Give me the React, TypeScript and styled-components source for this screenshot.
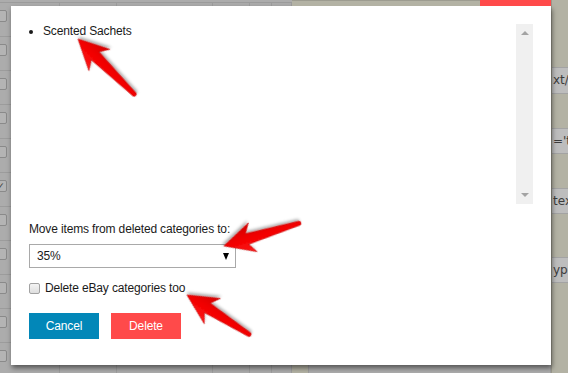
import React from "react";
import styled, { createGlobalStyle } from "styled-components";

const GlobalStyle = createGlobalStyle`
  html, body {
    margin: 0;
    padding: 0;
    background: #acacac;
  }
`;

const Page = styled.div`
  position: relative;
  width: 568px;
  height: 373px;
  overflow: hidden;
  display: flex;
  background: #acacac;
  font-family: "Liberation Sans", Arial, sans-serif;
`;

/* ---------- dimmed page behind the dialog ---------- */

const TablePane = styled.div`
  flex: 0 0 551px;
  display: flex;
  flex-direction: column;
`;

const HeaderBar = styled.div`
  height: 3px;
  display: flex;
  border-bottom: 1px solid #9c9c9c;
  box-sizing: border-box;
`;

const HeaderSpacer = styled.div`
  flex: 0 0 292px;
`;

const HeaderOlive = styled.div`
  position: relative;
  z-index: 1;
  flex: 1;
  height: 6px;
  background: #b3b2a4;
  border-top: 1px solid #9d9c90;
  box-sizing: border-box;
`;

const RedTab = styled.div`
  position: relative;
  z-index: 1;
  flex: 0 0 71px;
  height: 6px;
  background: #ff4a4a;
`;

const TableRow = styled.div`
  height: 34px;
  flex: none;
  display: grid;
  grid-template-columns: 60px 57px 96px 37px 22px 20px 17px 1fr;
  border-bottom: 1px solid #9c9c9c;
  box-sizing: border-box;
`;

const Cell = styled.div<{ $olive?: boolean }>`
  border-right: 1px solid #9e9e9e;
  background: ${(p) => (p.$olive ? "#b3b2a4" : "transparent")};
  padding-top: 7px;
`;

const RowCheck = styled.span<{ $checked?: boolean }>`
  display: block;
  width: 10px;
  height: 10px;
  margin-left: -5px;
  border: 1px solid #8a8a8a;
  border-radius: 2px;
  background: #b4b4b4;
  color: #333;
  font-size: 9px;
  line-height: 10px;
  text-align: center;
`;

const SidePane = styled.div`
  flex: 1;
  display: flex;
  flex-direction: column;
  background: #b3b2a4;
  border-left: 1px solid #9a998c;
`;

const SideBand = styled.div<{ $h: number; $grey?: boolean }>`
  height: ${(p) => p.$h}px;
  flex: none;
  box-sizing: border-box;
  background: ${(p) => (p.$grey ? "#bdbdbd" : "#b3b2a4")};
  border-top: ${(p) => (p.$grey ? "1px solid #a3a3a3" : "none")};
  border-bottom: ${(p) => (p.$grey ? "1px solid #a3a3a3" : "none")};
  font-family: "DejaVu Sans", Verdana, sans-serif;
  font-size: 12px;
  color: #3c3c3c;
  white-space: nowrap;
  overflow: hidden;
  line-height: 24px;
  padding-left: 1px;
`;

/* ---------- dialog ---------- */

const Modal = styled.div`
  position: absolute;
  left: 11px;
  top: 6px;
  width: 540px;
  box-sizing: border-box;
  padding: 18px 18px 26px;
  background: #fff;
  box-shadow: 1px 3px 5px rgba(0, 0, 0, 0.5);
  display: flex;
  flex-direction: column;
  font-size: 12px;
  letter-spacing: -0.15px;
  color: #1a1a1a;
`;

const ListBox = styled.div`
  height: 180px;
  display: flex;
`;

const ItemList = styled.ul`
  flex: 1;
  margin: 0;
  padding: 0 0 0 14px;
  list-style: disc;
  line-height: 14px;
`;

const Scrollbar = styled.div`
  width: 17px;
  background: #f0f0f0;
  display: flex;
  flex-direction: column;
  justify-content: space-between;
  align-items: center;
  padding: 7px 0;
  box-sizing: border-box;
`;

const ScrollArrow = styled.span<{ $down?: boolean }>`
  width: 0;
  height: 0;
  border-left: 4px solid transparent;
  border-right: 4px solid transparent;
  border-bottom: ${(p) => (p.$down ? "0" : "4px solid #a3a3a3")};
  border-top: ${(p) => (p.$down ? "4px solid #a3a3a3" : "0")};
`;

const FieldLabel = styled.div`
  margin-top: 17px;
  line-height: 16px;
`;

const SelectBox = styled.div`
  margin-top: 7px;
  width: 207px;
  height: 24px;
  box-sizing: border-box;
  border: 1px solid #a9a9a9;
  display: flex;
  align-items: center;
  justify-content: space-between;
  padding: 0 6px 0 7px;
`;

const Caret = styled.span`
  width: 0;
  height: 0;
  border-left: 3.5px solid transparent;
  border-right: 3.5px solid transparent;
  border-top: 7px solid #000;
`;

const CheckRow = styled.label`
  margin-top: 12px;
  display: flex;
  align-items: center;
  gap: 5px;
  line-height: 16px;
`;

const CheckBox = styled.span`
  width: 11px;
  height: 11px;
  box-sizing: border-box;
  border: 1px solid #a2a2a2;
  border-radius: 2px;
  background: linear-gradient(#f4f4f4, #dedede);
`;

const ButtonRow = styled.div`
  margin-top: 17px;
  display: flex;
  gap: 12px;
`;

const Button = styled.button<{ $danger?: boolean }>`
  width: 70px;
  height: 26px;
  border: none;
  padding: 0;
  color: #fff;
  font-family: inherit;
  font-size: 12px;
  letter-spacing: -0.15px;
  background: ${(p) => (p.$danger ? "#ff4a4a" : "#0287b8")};
`;

/* ---------- annotation arrows ---------- */

const Annotations = styled.svg`
  position: absolute;
  left: 0;
  top: 0;
  z-index: 2;
  pointer-events: none;
`;

type Pt = [number, number];

const Arrow: React.FC<{ tail: Pt; tip: Pt }> = ({ tail, tip }) => {
  const dx = tip[0] - tail[0];
  const dy = tip[1] - tail[1];
  const len = Math.sqrt(dx * dx + dy * dy);
  const angle = (Math.atan2(dy, dx) * 180) / Math.PI;
  const d = `M 0 -2 L ${len - 24} -5.5 L ${len - 30} -15 L ${len} 0 L ${len - 30} 15 L ${len - 24} 5.5 L 0 2 Q -2 0 0 -2 Z`;
  return (
    <g transform={`translate(${tail[0]} ${tail[1]}) rotate(${angle})`}>
      <path d={d} fill="url(#arrowFill)" stroke="#c80000" strokeWidth="0.6" strokeLinejoin="round" filter="url(#arrowShadow)" />
    </g>
  );
};

const rows = Array.from({ length: 11 }, (_, i) => i);

const sideBands: { h: number; grey?: boolean; text?: string }[] = [
  { h: 67 },
  { h: 27, grey: true, text: "xt/j" },
  { h: 34 },
  { h: 26, grey: true, text: "='tex" },
  { h: 34 },
  { h: 26, grey: true, text: "tex" },
  { h: 43 },
  { h: 26, grey: true, text: "ype" },
  { h: 90 },
];

export default function App() {
  return (
    <Page>
      <GlobalStyle />
      <TablePane>
        <HeaderBar>
          <HeaderSpacer />
          <HeaderOlive />
          <RedTab />
        </HeaderBar>
        {rows.map((i) => (
          <TableRow key={i}>
            <Cell>
              <RowCheck $checked={i === 5}>{i === 5 ? "✓" : ""}</RowCheck>
            </Cell>
            <Cell />
            <Cell />
            <Cell />
            <Cell />
            <Cell />
            <Cell $olive />
            <Cell />
          </TableRow>
        ))}
      </TablePane>
      <SidePane>
        {sideBands.map((b, i) => (
          <SideBand key={i} $h={b.h} $grey={b.grey}>
            {b.text}
          </SideBand>
        ))}
      </SidePane>

      <Modal>
        <ListBox>
          <ItemList>
            <li>Scented Sachets</li>
          </ItemList>
          <Scrollbar>
            <ScrollArrow />
            <ScrollArrow $down />
          </Scrollbar>
        </ListBox>
        <FieldLabel>Move items from deleted categories to:</FieldLabel>
        <SelectBox>
          <span>35%</span>
          <Caret />
        </SelectBox>
        <CheckRow>
          <CheckBox />
          Delete eBay categories too
        </CheckRow>
        <ButtonRow>
          <Button>Cancel</Button>
          <Button $danger>Delete</Button>
        </ButtonRow>
      </Modal>

      <Annotations width="568" height="373" viewBox="0 0 568 373">
        <defs>
          <linearGradient id="arrowFill" x1="0" y1="0" x2="0" y2="1">
            <stop offset="0" stopColor="#ff1a1a" />
            <stop offset="0.5" stopColor="#f20000" />
            <stop offset="1" stopColor="#d40000" />
          </linearGradient>
          <filter id="arrowShadow" x="-30%" y="-30%" width="160%" height="160%">
            <feDropShadow dx="1" dy="2" stdDeviation="1.5" floodColor="#000" floodOpacity="0.35" />
          </filter>
        </defs>
        <Arrow tail={[135, 95]} tip={[78, 39]} />
        <Arrow tail={[300, 223]} tip={[224, 246]} />
        <Arrow tail={[250, 335]} tip={[187, 295]} />
      </Annotations>
    </Page>
  );
}
